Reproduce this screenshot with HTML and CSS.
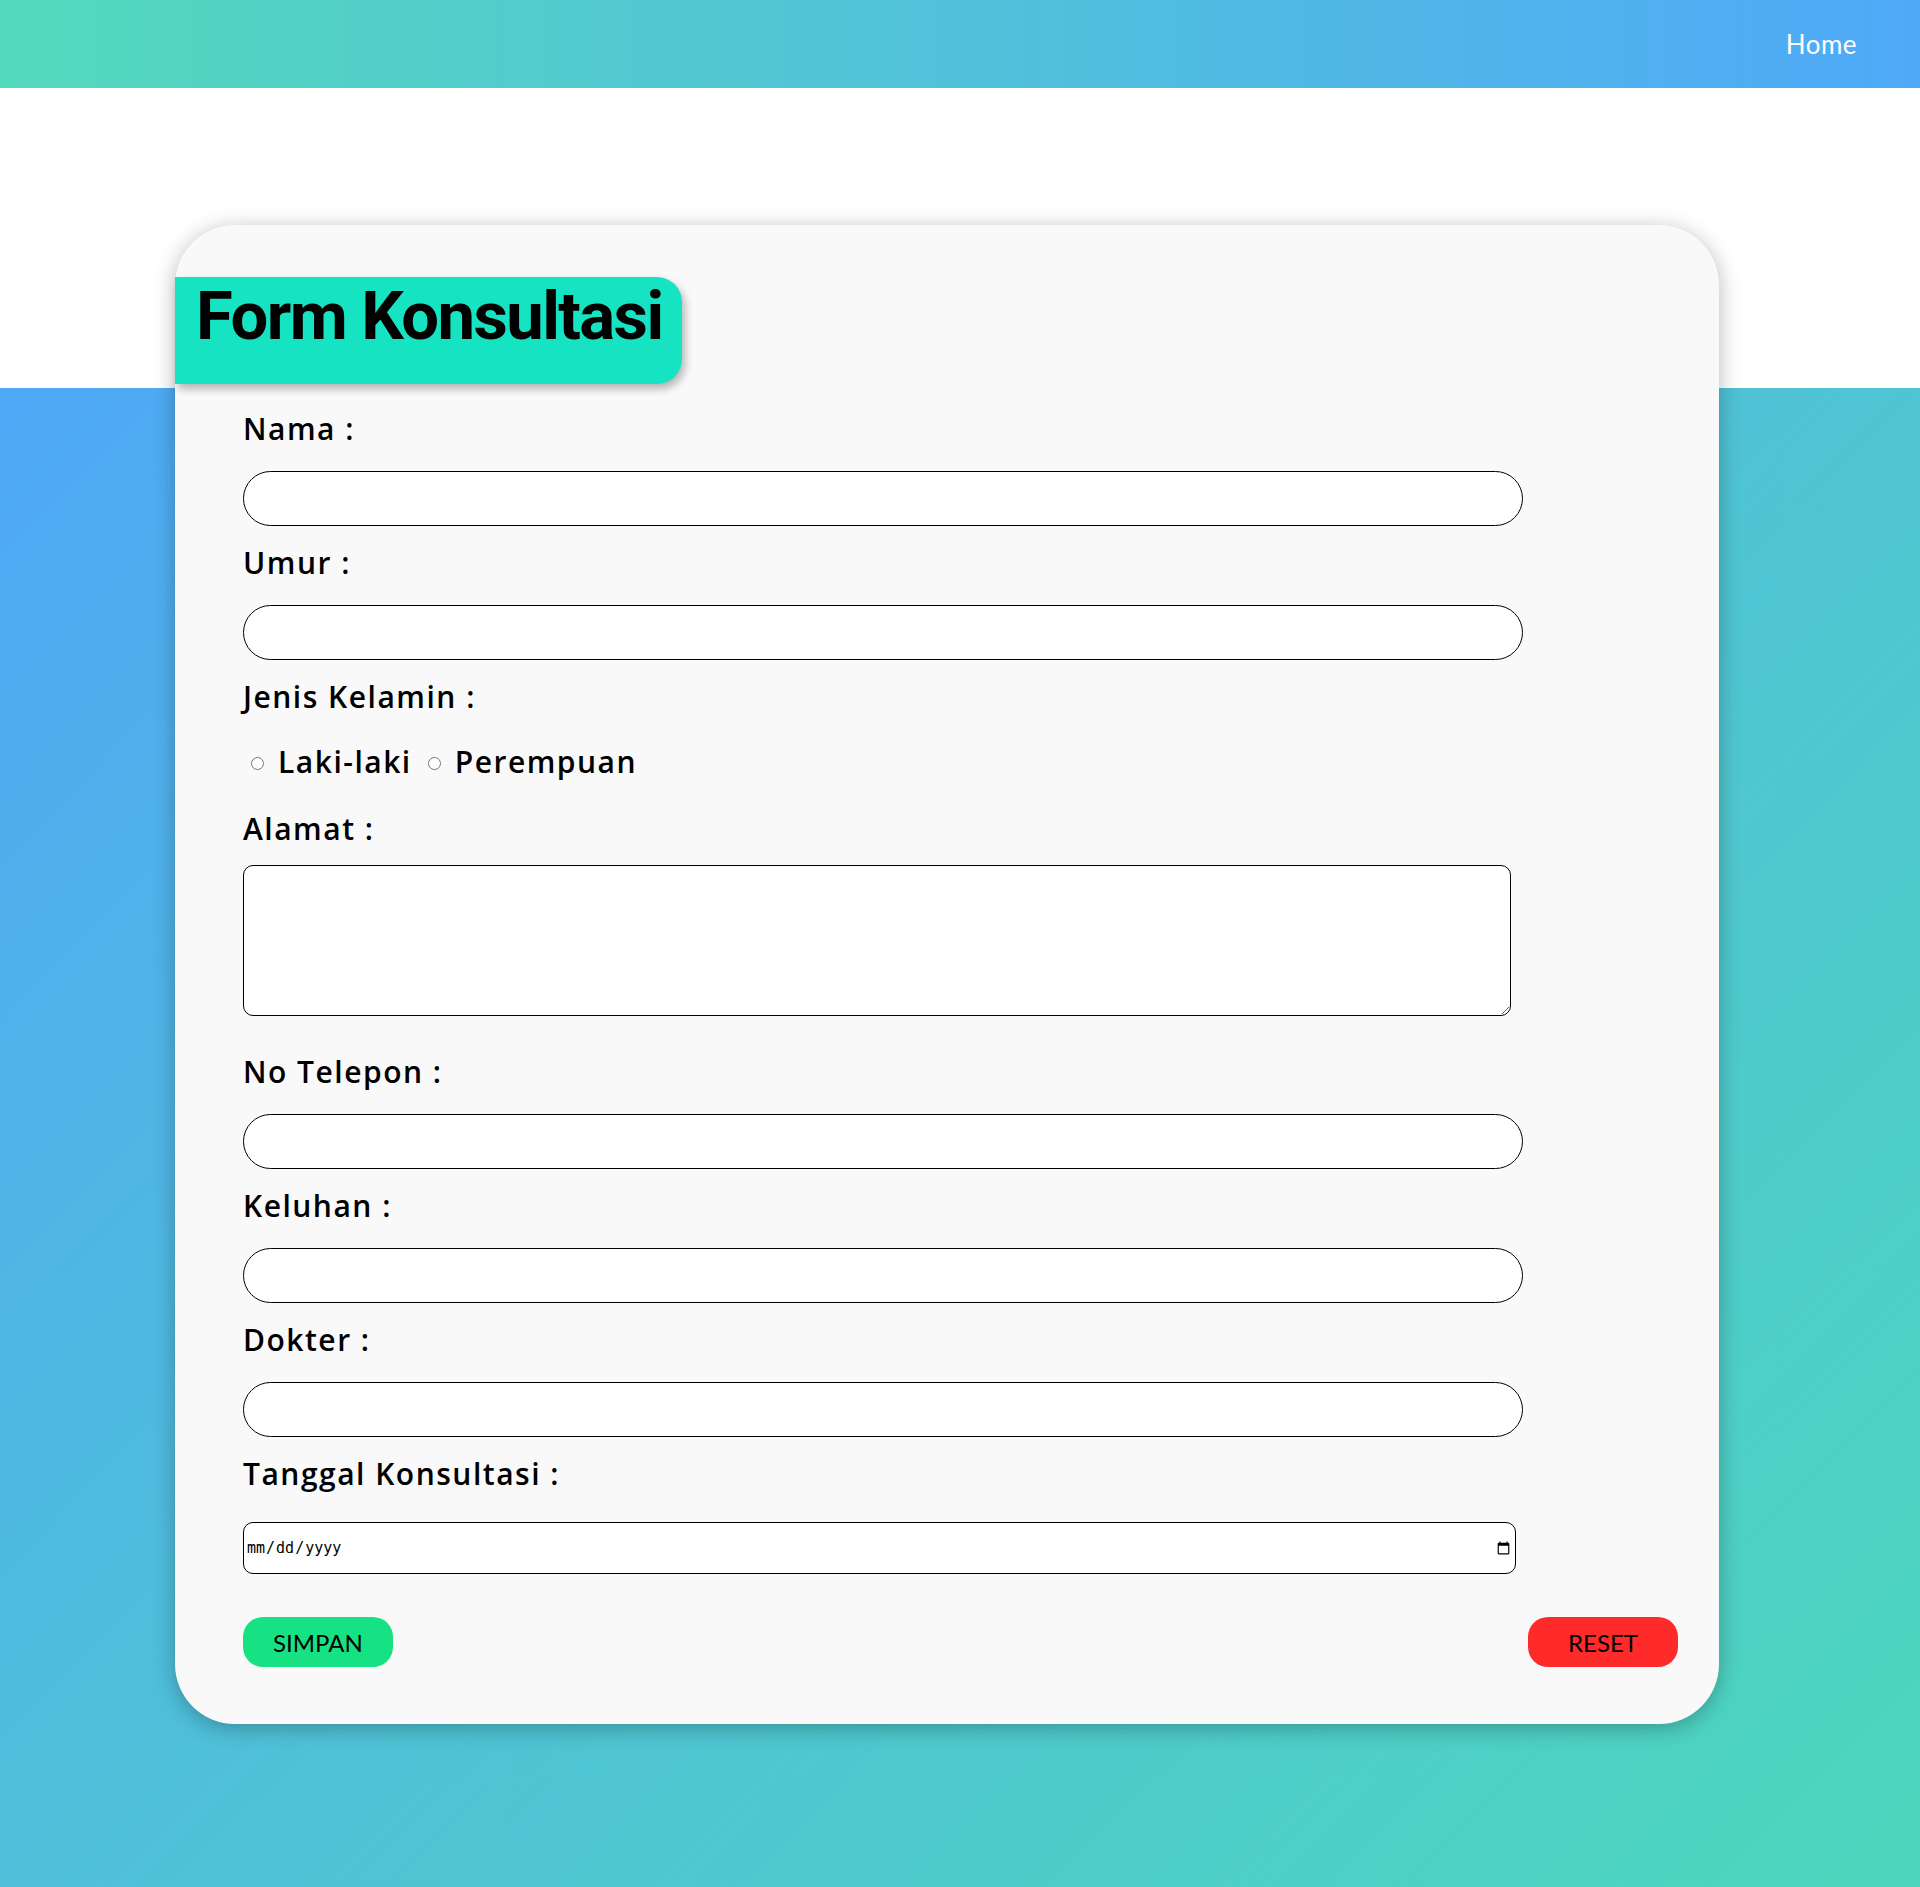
FILE: index.html
```html
<!DOCTYPE html>
<html lang="id">
<head>
<meta charset="utf-8">
<title>Form Konsultasi</title>
<link rel="stylesheet" href="styles.css">
</head>
<body>
<header class="topbar">
  <nav class="nav">
    <a class="nav-link" href="#">Home</a>
  </nav>
</header>
<main class="main">
  <section class="card">
    <h1 class="card-title">Form Konsultasi</h1>
    <form class="form">
      <label class="label" for="nama">Nama :</label>
      <input class="field" type="text" id="nama">

      <label class="label gap-top" for="umur">Umur :</label>
      <input class="field" type="text" id="umur">

      <span class="label gap-top">Jenis Kelamin :</span>
      <div class="radio-row">
        <input class="radio" type="radio" name="jk" id="laki"><label class="radio-label" for="laki">Laki-laki</label>
        <input class="radio" type="radio" name="jk" id="perempuan"><label class="radio-label" for="perempuan">Perempuan</label>
      </div>

      <label class="label alamat-label" for="alamat">Alamat :</label>
      <textarea class="area" id="alamat"></textarea>

      <label class="label telp-label" for="telp">No Telepon :</label>
      <input class="field" type="text" id="telp">

      <label class="label gap-top" for="keluhan">Keluhan :</label>
      <input class="field" type="text" id="keluhan">

      <label class="label gap-top" for="dokter">Dokter :</label>
      <input class="field" type="text" id="dokter">

      <label class="label gap-top" for="tanggal">Tanggal Konsultasi :</label>
      <input class="date" type="date" id="tanggal">

      <div class="actions">
        <button class="btn btn-save" type="submit">SIMPAN</button>
        <button class="btn btn-reset" type="reset">RESET</button>
      </div>
    </form>
  </section>
</main>
</body>
</html>
```
FILE: styles.css
```css
* { box-sizing: border-box; }

html, body {
  margin: 0;
  padding: 0;
}

body {
  font-family: "Open Sans", "Lato", sans-serif;
  color: #000;
  background: #fff;
}

.topbar {
  height: 88px;
  background: linear-gradient(to right, #53d9bc, #4fa9f8);
  display: flex;
  align-items: center;
  justify-content: flex-end;
  padding-right: 63px;
}

.nav-link {
  color: #fff;
  text-decoration: none;
  font-family: "Lato", sans-serif;
  font-size: 26px;
  font-weight: 400;
  letter-spacing: 0.5px;
}

.main {
  min-height: 1799px;
  padding-top: 137px;
  padding-bottom: 163px;
  background:
    linear-gradient(135deg, #4fa8f6 0%, #4fc2d6 50%, #4dd7bd 100%) 0 300px / 100% calc(100% - 300px) no-repeat,
    #fff;
}

.card {
  margin-left: 175px;
  width: 1544px;
  height: 1499px;
  background: #f9f9f9;
  border-radius: 60px;
  box-shadow: 0 4px 22px rgba(0, 0, 0, 0.28);
  padding-top: 52px;
}

.card-title {
  margin: 0;
  width: 507px;
  height: 107px;
  background: #16e3c1;
  border-radius: 0 25px 25px 0;
  box-shadow: 3px 5px 8px rgba(0, 0, 0, 0.28);
  padding: 6px 0 0 21px;
  font-family: "Roboto", "Noto Sans", sans-serif;
  font-weight: 700;
  font-size: 67px;
  line-height: 1;
  letter-spacing: -1.6px;
  white-space: nowrap;
}

.form {
  display: flex;
  flex-direction: column;
  align-items: flex-start;
  padding: 28px 41px 0 68px;
}

.label {
  display: block;
  font-size: 30px;
  font-weight: 600;
  letter-spacing: 1.5px;
  line-height: 34px;
  height: 34px;
}

.gap-top { margin-top: 20px; }

.field {
  display: block;
  margin-top: 25px;
  width: 1280px;
  height: 55px;
  border: 1px solid #000;
  border-radius: 28px;
  background: #fff;
  padding: 0 20px;
  font-size: 20px;
}

.radio-row {
  margin-top: 31px;
  height: 34px;
  display: flex;
  align-items: center;
}

.radio {
  width: 13px;
  height: 13px;
  margin: 3px 14px 0 8px;
}

.radio-label {
  font-size: 30px;
  font-weight: 600;
  letter-spacing: 1.5px;
  line-height: 34px;
  margin-right: 8px;
}

.alamat-label { margin-top: 33px; }

.area {
  display: block;
  margin-top: 19px;
  width: 1268px;
  height: 151px;
  border: 1px solid #000;
  border-radius: 10px;
  background: #fff;
}

.telp-label { margin-top: 39px; }

.date {
  display: block;
  margin-top: 31px;
  width: 1273px;
  height: 52px;
  border: 1px solid #000;
  border-radius: 10px;
  background: #fff;
  padding: 1px 2px;
  font-family: "DejaVu Sans Mono", monospace;
  font-size: 15px;
}

.actions {
  margin-top: 43px;
  width: 1435px;
  display: flex;
  justify-content: space-between;
}

.btn {
  width: 150px;
  height: 50px;
  border: none;
  border-radius: 20px;
  font-family: "Lato", sans-serif;
  font-size: 24px;
  font-weight: 400;
  color: #000;
  cursor: pointer;
}

.btn-save { background: #16e284; }
.btn-reset { background: #ff2a2a; }
```
